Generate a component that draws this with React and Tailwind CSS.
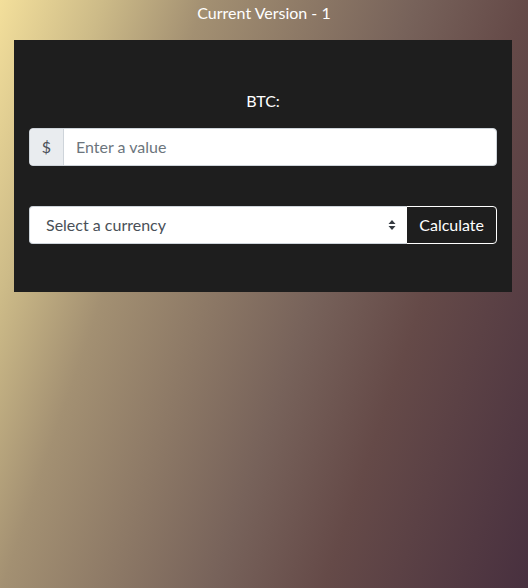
export default function App() {
  return (
    <div
      className="min-h-screen w-full bg-[linear-gradient(109deg,#f3df9b_0%,#cdbb88_14%,#a39072_28%,#77625a_57%,#654a48_72%,#48303f_100%)] text-white"
      style={{ fontFamily: '"Segoe UI", "Lato", "Noto Sans", sans-serif' }}
    >
      <h1 className="pt-[2px] text-center text-base leading-[22px]">Current Version - 1</h1>
      <div className="ml-[14px] mr-[16px] mt-[16px] h-[252px] bg-[#1e1e1e] px-[15px] pt-[50px]">
        <p className="text-center text-base leading-[22px]">BTC:</p>
        <div className="mt-[16px] flex h-[38px] rounded border border-[#ced4da] bg-white">
          <span className="flex w-[34px] items-center justify-center rounded-l border-r border-[#ced4da] bg-[#e9ecef] text-base text-[#495057]">
            $
          </span>
          <input
            className="min-w-0 flex-1 rounded-r px-3 text-base text-[#495057] outline-none placeholder:text-[#6c757d]"
            placeholder="Enter a value"
          />
        </div>
        <div className="mt-[40px] flex h-[38px]">
          <div className="relative flex flex-1 items-center rounded-l border border-r-0 border-[#ced4da] bg-white pl-4 text-base text-[#495057]">
            Select a currency
            <svg className="absolute right-[10px] top-1/2 -translate-y-1/2" width="8" height="12" viewBox="0 0 8 12">
              <path d="M4 1 L7.5 5 H0.5 Z" fill="#343a40" />
              <path d="M4 11 L7.5 7 H0.5 Z" fill="#343a40" />
            </svg>
          </div>
          <button className="rounded-r border border-white bg-[#1e1e1e] px-3 text-base text-white">Calculate</button>
        </div>
      </div>
    </div>
  )
}
